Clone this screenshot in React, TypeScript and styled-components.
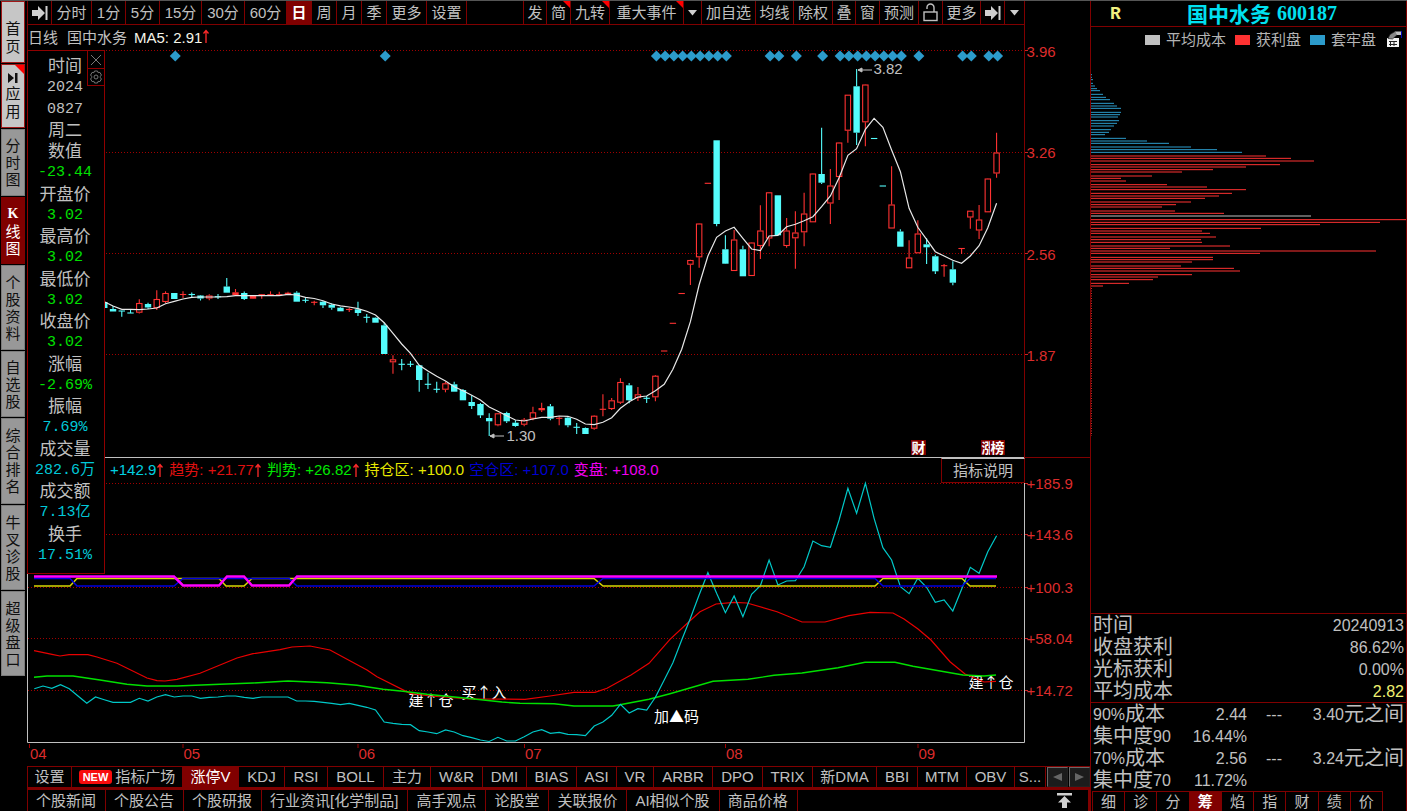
import React from 'react';
import styled, { createGlobalStyle, css } from 'styled-components';

const DARK_RED = '#800000';
const GREY = '#c0c0c0';
const CYAN = '#54fcfc';
const RED = '#ff3232';
const BLUE = '#2c9bcb';
const SANS = `'Liberation Sans', 'Noto Sans CJK SC', sans-serif`;
const CJK = `'Noto Sans CJK SC', sans-serif`;

const GlobalStyle = createGlobalStyle`
  * { box-sizing: border-box; }
  body { margin: 0; background: #000; color: ${GREY}; font: 15px/20px ${SANS}; overflow: hidden; }
  button { font: inherit; color: inherit; background: none; border: 0; padding: 0; margin: 0; cursor: pointer; }
`;

/* ---------- data ---------- */

type Kind = 'r' | 'c';
type Candle = [Kind, number, number, number, number];

const FIRST_CANDLE = 8;
const xAt = (i: number) => 34.3 + 8.748 * i;

/* kind, high, body top, body bottom, low */
const CANDLES: Candle[] = [
  ['c', 301, 302, 308, 308], ['c', 306, 309, 311.5, 311.5], ['c', 311, 311, 311, 316.7], ['c', 309, 313, 313, 313],
  ['r', 299.3, 303, 312.7, 313.5], ['c', 302.7, 304, 307.5, 309], ['r', 290.3, 299, 308, 310], ['r', 291.3, 293, 302, 303],
  ['c', 293, 293, 299, 299], ['r', 291.3, 294.5, 294.5, 298], ['c', 292.5, 294.5, 294.5, 298], ['c', 295, 295.5, 298.5, 300.5],
  ['r', 294.3, 295.5, 298.5, 300.3], ['c', 294, 296.7, 296.7, 299], ['c', 278, 286.5, 292.7, 292.7], ['r', 289, 292.3, 295, 296],
  ['c', 291.5, 293, 299, 300], ['r', 295, 296, 298.7, 299], ['r', 294.5, 294.7, 294.7, 298.7], ['r', 291.3, 294.7, 294.7, 295],
  ['r', 291.7, 294.7, 294.7, 295], ['r', 291.7, 292.7, 294.7, 295], ['c', 291.3, 292.7, 301.7, 301.7], ['c', 298, 300.3, 300.3, 302.7],
  ['r', 300.7, 302.3, 302.3, 305.3], ['c', 301, 301.7, 305.3, 308], ['c', 303.3, 304.7, 307.7, 309.7], ['c', 307, 307.7, 311.3, 311.3],
  ['r', 307.7, 309.5, 309.5, 312], ['c', 301.7, 309.3, 313, 316], ['c', 314, 317.3, 317.3, 322.7], ['c', 317.3, 317.7, 322.7, 322.7],
  ['c', 322.7, 325.3, 354, 354], ['r', 355.3, 359.3, 362.3, 373.7], ['c', 359, 364.3, 364.3, 370.3], ['c', 361, 364.3, 364.3, 367],
  ['c', 365, 365.3, 380, 391.7], ['c', 372.7, 384.3, 384.3, 389], ['c', 381.7, 389.3, 389.3, 392.7], ['r', 381.7, 383.3, 389.7, 392.3],
  ['c', 381.7, 384.3, 391.7, 391.7], ['c', 389, 390, 400.3, 400.3], ['c', 395.3, 402, 406, 409], ['c', 403, 404, 415.3, 418],
  ['c', 413.3, 418, 421.3, 436], ['r', 413, 413.3, 425.3, 426.3], ['c', 411.7, 413, 421.3, 423], ['c', 420.3, 422.7, 426, 426.7],
  ['r', 418, 419.7, 424.7, 426.3], ['r', 406.7, 412.3, 418.7, 420.3], ['r', 402.7, 408, 410.3, 412], ['c', 404, 406.3, 418.7, 420.3],
  ['r', 416.7, 418.3, 418.3, 425.3], ['c', 417, 417.7, 425.3, 427.3], ['c', 423, 427.3, 427.3, 434], ['c', 427.5, 428, 434, 434],
  ['r', 415.3, 415.7, 428.7, 429.7], ['r', 394.3, 409.3, 409.3, 416.3], ['r', 398, 400.3, 409, 410], ['r', 378.3, 382, 402.7, 404],
  ['c', 383, 385.3, 400.3, 403.3], ['r', 387, 394.3, 398, 401], ['c', 396, 398.3, 398.3, 403], ['r', 375, 375.7, 397.3, 401.3],
  ['r', 351, 351, 351, 351], ['r', 323.3, 323.3, 323.3, 323.3], ['r', 293.5, 293.5, 293.5, 293.5], ['r', 259.7, 260, 264.7, 285],
  ['r', 223.3, 223.5, 257.3, 267.7], ['r', 183.3, 183.3, 183.3, 183.3], ['c', 140.3, 140.3, 224, 226.3], ['c', 235.3, 249.3, 263.7, 264],
  ['r', 230, 239.5, 271, 271], ['c', 245.7, 249.3, 276.3, 276.3], ['r', 242.3, 242.5, 276, 276], ['r', 205.3, 230.5, 246, 259],
  ['r', 192, 192.3, 238.5, 246.3], ['c', 195.3, 195.3, 235.3, 235.3], ['r', 218, 230.5, 246, 247.7], ['r', 211.3, 232.5, 238.3, 268.7],
  ['r', 192.7, 213.5, 232.3, 246.3], ['r', 173.3, 173.5, 222.3, 222.3], ['c', 127.7, 174, 182.7, 184], ['r', 169, 185.5, 203.5, 224],
  ['r', 142.3, 142.5, 177, 200], ['r', 94.7, 94.7, 130.7, 142.7], ['c', 69, 86.3, 132.7, 145], ['r', 84.3, 84.5, 122.3, 146.3],
  ['c', 138.5, 138.5, 138.5, 138.5], ['c', 186, 186, 186, 186], ['r', 166.3, 204.5, 228.5, 228.5], ['c', 229.3, 231.5, 246.7, 246.7],
  ['r', 240.3, 257.5, 268.3, 268.3], ['r', 220.3, 233.5, 253.3, 253.3], ['c', 238.3, 244.3, 247.3, 264], ['c', 254.7, 256.3, 271.3, 274],
  ['r', 264, 265.7, 265.7, 276.7], ['c', 261.3, 269.3, 282.7, 285.3], ['r', 248.5, 248.5, 248.5, 254], ['r', 210.7, 210.7, 217.5, 228.7],
  ['r', 205, 219.5, 230.5, 239], ['r', 178.3, 178.5, 212.3, 212.3], ['r', 132.7, 152.5, 173.5, 177.7],
];

const MA5 = [
  301.7, 306, 309.3, 309.3, 309.7, 309, 308, 303.7, 301.3, 299, 297.3, 297, 297, 297, 296.7, 295.7, 295.7, 295.7, 295.7, 295.7, 295.7,
  294.3, 295, 297.3, 298.5, 300.7, 304, 305.8, 307, 308.7, 311.3, 315, 322.7, 333.3, 344, 353.3, 365.3, 371, 376.3, 381, 386.7, 390.7,
  395.3, 400, 407, 411.3, 415.7, 420, 421, 419, 417.3, 417.3, 416, 416.3, 419.3, 424, 424.7, 422.3, 417.7, 408.3, 401.7, 397, 396,
  390.7, 384.3, 369.3, 349.3, 321.7, 285, 256, 237.3, 231, 227.3, 238.3, 249, 250.7, 236, 235.3, 226.7, 224.3, 220.7, 216.7, 206.7,
  196, 177.7, 155.3, 148.7, 129.3, 118.3, 127.3, 150, 171.7, 208.3, 227.3, 239.3, 251.7, 256, 260.3, 263.3, 256, 245.7, 227.7, 203.3,
];

const TREND = [
  688.7, 686, 688.3, 684.7, 688.7, 696, 703.3, 697, 699.7, 702.3, 702.3, 702.3, 698.3, 701, 697, 694.7, 697, 696, 696, 698.3, 697.3,
  697, 696, 696, 697.3, 698.3, 697, 697, 697, 697, 701, 701, 701.3, 702.3, 703.3, 704.7, 703.3, 705.3, 707.3, 710, 722, 723.3, 724.3,
  724.7, 730.7, 732, 733.7, 730, 732, 735.7, 737.7, 740, 741.5, 737.3, 741, 741, 736.7, 732, 729.7, 733.3, 732.3, 734.3, 734.7, 735.7,
  726, 722, 715.3, 704.3, 713, 708.7, 710, 697.3, 680, 662.7, 640, 618.3, 595, 572.7, 593.3, 612.7, 596, 616.7, 594.3, 585.7, 560, 585,
  581, 580.7, 566.7, 541, 545.7, 547.3, 520, 488.3, 513.3, 483.3, 518.3, 547.7, 560, 586.7, 593.7, 578.3, 587.3, 602.3, 600, 611,
  589.3, 567.3, 573.3, 551.7, 535.7,
];

const RED_LINE =
  '34,650.7 52,654.3 60,656 69,654.7 88,654.7 97,657 117,663.3 147,678 157,680.7 165,681 177,679.3 200,673.3 237,658 253,653.7 280,649.7 292,647 310,646 330,650 367,670 377,676.7 410,693.3 430,696 470,699 525,699.3 550,696 574,692.3 595,692.3 607,688.3 631,675 649,663.3 670,639.3 690,620.7 700,611.7 716,604 734,602.3 747,603 777,611.7 802,622 825,622 849,615.7 870,612.3 893,613 904,619 918,629 931,640 950,661.7 965,674 984,682 996,681.3';
const GREEN_LINE =
  '34,677.3 47,676 73,676 100,680 127,684.3 147,686 177,686 220,684.3 253,683 288,681 327,682.7 357,685.3 383,689.3 403,691.3 427,694.3 467,698.3 502,702 520,703.3 554,703.7 574,706 613,706 620,704.7 649,699.3 670,693.7 713,681.3 748,679.3 774,675.3 802,673 838,667.7 865,662.3 895,662.3 913,666.3 963,675 984,676 996,675';

const toPoints = (ys: number[], from: number) => ys.map((y, i) => `${xAt(from + i).toFixed(1)},${y}`).join(' ');

const MARKED = [16, 40, 71, 72, 73, 74, 75, 76, 77, 78, 79, 84, 85, 87, 90, 92, 93, 94, 95, 96, 97, 98, 99, 101, 106, 107, 109, 110];

/* y position in thirds of a pixel, bar length */
const TRAPPED = [
  [224, 1], [232, 1], [239, 2], [250, 2], [258, 4], [266, 6], [272, 9], [283, 12], [292, 15], [299, 19], [310, 23], [318, 26], [325, 30],
  [337, 30], [344, 29], [351, 27], [362, 28], [370, 26], [378, 23], [389, 20], [397, 18], [404, 14], [415, 35], [423, 56], [430, 78],
  [441, 100], [449, 126], [457, 151],
];
const PROFIT = [
  [468, 175], [475, 200], [483, 223], [494, 189], [501, 155], [509, 122], [516, 91], [528, 61], [535, 30], [543, 35], [554, 76],
  [561, 116], [569, 155], [580, 141], [588, 128], [595, 114], [606, 100], [614, 85], [621, 71], [633, 84], [640, 133], [659, 315],
  [667, 289], [674, 229], [685, 170], [693, 111], [700, 119], [711, 125], [719, 110], [727, 111], [738, 139], [745, 79], [753, 285],
  [760, 169], [772, 122], [779, 122], [786, 101], [798, 90], [805, 143], [813, 149], [824, 101], [831, 67], [839, 62], [850, 38], [858, 12],
];

/* ---------- shell ---------- */

const Page = styled.div`
  display: flex;
  height: 100vh;
  background: #000;
  border-top: 1px solid #555;
`;

const SideNav = styled.nav`
  flex: none;
  width: 27px;
  padding: 0 1px;
  display: flex;
  flex-direction: column;
  gap: 1px;
`;

const SideButton = styled.button<{ $tone: 'light' | 'grey' | 'active'; $h: number }>`
  position: relative;
  width: 24px;
  height: ${p => p.$h}px;
  flex: none;
  padding: 0 4px;
  display: flex;
  flex-direction: column;
  align-items: center;
  justify-content: center;
  gap: 2px;
  word-break: break-all;
  line-height: 17px;
  color: #101010;
  background: #989898;
  border: 1px solid #7c7c7c;
  ${p => p.$tone === 'light' && css`
    justify-content: flex-end;
    padding-bottom: 6px;
    line-height: 18px;
    background: #c6c6c6;
    border-color: #a01818;
  `}
  ${p => p.$tone === 'active' && css`gap: 0; background: ${DARK_RED}; border-color: ${DARK_RED}; color: #fff;`}
`;

const SerifK = styled.b`
  font: bold 14px/18px 'Liberation Serif', serif;
`;

const Corner = styled.i<{ $s: number }>`
  position: absolute;
  top: 0;
  right: 0;
  border-style: solid;
  border-width: 0 ${p => p.$s}px ${p => p.$s}px 0;
  border-color: transparent #ff0000 transparent transparent;
`;

const Main = styled.main`
  flex: 1;
  min-width: 0;
  display: flex;
  flex-direction: column;
  position: relative;
`;

/* ---------- toolbar ---------- */

const Toolbar = styled.div`
  flex: none;
  height: 24px;
  display: flex;
  justify-content: space-between;
  border: solid ${DARK_RED};
  border-width: 0 1px 1px;
  margin-right: 65px;
`;

const ToolGroup = styled.div`
  display: flex;
`;

const ToolButton = styled.button<{ $w: number; $active?: boolean }>`
  position: relative;
  width: ${p => p.$w}px;
  display: flex;
  align-items: center;
  justify-content: center;
  white-space: nowrap;
  border-right: 1px solid ${DARK_RED};
  ${p => p.$active && css`background: ${DARK_RED}; color: #fff; font-weight: bold;`}
  ${ToolGroup} + ${ToolGroup} &:first-child { border-left: 1px solid ${DARK_RED}; }
  ${ToolGroup} + ${ToolGroup} &:last-child { border-right: 0; }
`;

const TitleRow = styled.div`
  flex: none;
  height: 25px;
  padding-right: 65px;
`;

const TitleInner = styled.div`
  height: 100%;
  display: flex;
  align-items: center;
  gap: 9px;
  border: solid ${DARK_RED};
  border-width: 0 1px;
`;

const MaValue = styled.span`
  margin-left: -2px;
  color: #f4f4e8;
`;

const Arrow = styled.span`
  display: inline-block;
  width: 8px;
  color: #ff2a2a;
  svg { display: block; }
`;

const Up = () => (
  <Arrow role="img" aria-label="up">
    <svg width="8" height="14" viewBox="0 0 8 14"><path d="M4 1V14M1.5 4.5L4 1.5L6.500 4.500" fill="none" stroke="currentColor" strokeWidth="1.3" /></svg>
  </Arrow>
);

/* ---------- charts ---------- */

const Charts = styled.div`
  flex: 1;
  min-height: 0;
  position: relative;
  display: flex;
  flex-direction: column;
`;

const PricePane = styled.section`
  flex: 408 1 0;
  min-height: 0;
`;

const IndicatorPane = styled.section`
  flex: 308 1 0;
  min-height: 0;
  position: relative;
`;

const ChartSvg = styled.svg`
  display: block;
  width: 100%;
  height: 100%;
  overflow: visible;
  font: 15px ${SANS};
`;

const IndicatorLegend = styled.div`
  position: absolute;
  top: 2px;
  left: 83px;
  display: flex;
  gap: 5px;
`;

const LegendItem = styled.span<{ $c: string }>`
  display: flex;
  align-items: center;
  white-space: nowrap;
  color: ${p => p.$c};
`;

const HelpButton = styled.button`
  position: absolute;
  top: 0;
  right: 65px;
  width: 84px;
  height: 25px;
  background: #000;
  border: 1px solid ${DARK_RED};
  border-top-color: ${GREY};
`;

const DataPanel = styled.aside`
  position: absolute;
  z-index: 2;
  top: 0;
  left: 0;
  width: 78px;
  height: 524px;
  padding: 4px 2px 8px 0;
  background: #000;
  border: 1px solid #900000;
  display: flex;
  flex-direction: column;
`;

const DataRow = styled.div<{ $c?: string }>`
  flex: 1;
  display: flex;
  align-items: center;
  justify-content: center;
  white-space: nowrap;
  padding-bottom: 2px;
  font: 17px/19px ${CJK};
  color: ${GREY};
  ${p => p.$c && css`
    padding: 2px 0 0;
    color: ${p.$c};
    font: 15px/19px 'Liberation Mono', 'Noto Sans CJK SC', monospace;
  `}
`;

const PanelTools = styled.div`
  position: absolute;
  top: -1px;
  right: -1px;
  width: 18px;
  background: #000;
  border: 1px solid #900000;
`;

const PanelTool = styled.button`
  width: 16px;
  height: 17px;
  display: flex;
  align-items: center;
  justify-content: center;
  color: #777;
  & + & { border-top: 1px solid #900000; }
`;

/* ---------- bottom bars ---------- */

const IndicatorTabs = styled.div`
  flex: none;
  height: 21px;
  display: flex;
  border-top: 1px solid ${DARK_RED};
  border-left: 1px solid ${DARK_RED};
`;

const IndicatorTab = styled.button<{ $w: number; $active?: boolean }>`
  flex: none;
  width: ${p => p.$w}px;
  padding-bottom: 1px;
  display: flex;
  align-items: center;
  justify-content: center;
  gap: 3px;
  white-space: nowrap;
  border-right: 1px solid ${DARK_RED};
  ${p => p.$active && css`background: ${DARK_RED}; color: #fff;`}
`;

const MoreTab = styled(IndicatorTab)`
  flex: 1;
  min-width: 0;
`;

const NewBadge = styled.span`
  padding: 0 4px;
  border-radius: 3px;
  background: #f80c0c;
  color: #fff;
  font: bold 11px/14px ${SANS};
`;

const ScrollButton = styled.button`
  flex: none;
  width: 21px;
  margin-left: 1px;
  display: flex;
  align-items: center;
  justify-content: center;
  background: #1c1c1c;
  border: 1px solid #686868;
  border-right-color: #222;
  border-bottom-color: #222;
`;

const NewsBar = styled.div`
  flex: none;
  height: 24px;
  display: flex;
  border-top: 3px solid ${DARK_RED};
  border-left: 1px solid ${DARK_RED};
  border-right: 2px solid ${DARK_RED};
`;

const NewsTab = styled.button`
  padding: 0 9px 0 8px;
  white-space: nowrap;
  border-right: 1px solid ${DARK_RED};
`;

const TopButton = styled.button`
  margin: 0 16px 0 auto;
  display: flex;
  align-items: center;
`;

/* ---------- right column ---------- */

const Side = styled.aside`
  flex: none;
  width: 317px;
  display: flex;
  flex-direction: column;
  border: solid ${DARK_RED};
  border-width: 0 1px;
`;

const StockTitle = styled.header`
  flex: none;
  height: 26px;
  display: flex;
  align-items: center;
  padding-left: 19px;
  border-bottom: 1px solid ${DARK_RED};
`;

const Flag = styled.b`
  width: 77px;
  font: bold 18px/24px 'Liberation Mono', monospace;
  color: #f0f080;
`;

const StockName = styled.h1`
  margin: 0;
  padding-bottom: 2px;
  display: flex;
  gap: 6px;
  font: bold 21px/22px ${CJK};
  color: #00e0f0;
`;

const StockCode = styled.span`
  font: bold 20px/22px 'Liberation Serif', serif;
`;

const CostLegend = styled.div`
  flex: none;
  height: 25px;
  padding-right: 4px;
  display: flex;
  align-items: center;
  justify-content: flex-end;
  gap: 9px;
`;

const CostItem = styled.span<{ $c: string }>`
  display: flex;
  align-items: center;
  gap: 6px;
  white-space: nowrap;
  color: #b4b4b4;
  &::before { content: ''; width: 15px; height: 10px; background: ${p => p.$c}; }
`;

const CostChart = styled.svg`
  flex: 1;
  min-height: 0;
  width: 100%;
  display: block;
`;

const StatTable = styled.table`
  flex: none;
  width: 100%;
  border-collapse: collapse;
  border-top: 1px solid ${DARK_RED};
  table-layout: fixed;
  td, th {
    height: 22px;
    padding: 2px 2px 0;
    font: 16px/20px ${SANS};
    white-space: nowrap;
    text-align: right;
  }
  th { text-align: left; }
`;

const Cn = styled.span`
  font-size: 20px;
  line-height: 16px;
  vertical-align: -1px;
`;

const Highlight = styled.td`
  color: #f0f070;
`;

const SideTabs = styled.div`
  flex: none;
  height: 20px;
  padding: 0 23px 0 1px;
  display: flex;
`;

const SideTab = styled.button<{ $active?: boolean }>`
  flex: 1;
  line-height: 18px;
  border: 1px solid ${DARK_RED};
  border-left-width: 0;
  border-bottom: 0;
  &:first-child { border-left-width: 1px; }
  ${p => p.$active && css`background: ${DARK_RED}; color: #fff; font-weight: bold;`}
`;

/* ---------- icons ---------- */

const JumpIcon = () => (
  <svg width="16" height="14" viewBox="0 0 16 14"><path d="M0 4h6V0l7 7l-7 7V10H0zM13.500 0h2v14h-2z" fill="#d0d0d0" /></svg>
);
const DownIcon = () => (
  <svg width="9" height="6" viewBox="0 0 9 6"><path d="M0 0h9L4.500 5.500z" fill="#d0d0d0" /></svg>
);
const LockIcon = () => (
  <svg width="15" height="19" viewBox="0 0 15 19" fill="none" stroke={GREY} strokeWidth="1.4">
    <rect x="1" y="9" width="13" height="8.500" />
    <path d="M4 6V4.500a3.500 3.500 0 0 1 7 0V9" />
  </svg>
);
const GearIcon = () => (
  <svg width="14" height="14" viewBox="0 0 14 14" fill="none" stroke="currentColor">
    <path d="M5.500 1h3l.6 1.700 1.800-.3 1.500 2.600-1.100 1.500v1l1.100 1.500-1.500 2.600-1.800-.3L8.500 13h-3l-.6-1.700-1.800.3L1.600 9l1.100-1.500v-1L1.600 5l1.500-2.600 1.800.3z" />
    <circle cx="7" cy="7" r="2" />
  </svg>
);

/* ---------- chart pieces ---------- */

const GridLine = ({ y }: { y: number }) => (
  <g>
    <line x1="28" x2="1023" y1={y} y2={y} stroke="#a00000" strokeDasharray="1 2" />
    <line x1="1025" x2="1028" y1={y} y2={y} stroke="#d02020" />
  </g>
);

const AxisLabel = ({ y, children }: { y: number; children: string }) => (
  <text x="1026.500" y={y + 5.5} fill="#dc2c2c">{children}</text>
);

const CandleMark = ({ c, i }: { c: Candle; i: number }) => {
  const [kind, high, top, bottom, low] = c;
  const x = xAt(i);
  const color = kind === 'r' ? RED : CYAN;
  if (top === bottom) {
    return (
      <g stroke={color} strokeWidth="1.1">
        <line x1={x - 3.2} x2={x + 3.2} y1={top} y2={top} />
        {low - high > 0.5 && <line x1={x} x2={x} y1={high} y2={low} />}
      </g>
    );
  }
  return (
    <g stroke={color} strokeWidth="1.1">
      {high < top && <line x1={x} x2={x} y1={high} y2={top} />}
      {low > bottom && <line x1={x} x2={x} y1={bottom} y2={low} />}
      {kind === 'c' || bottom - top < 2.9
        ? <rect x={x - 3.2} y={top} width="6.400" height={bottom - top} fill={color} stroke="none" />
        : <rect x={x - 2.7} y={top + 0.5} width="5.400" height={bottom - top - 1} fill="none" />}
    </g>
  );
};

const EventBadge = ({ x, children }: { x: number; children: string }) => (
  <g>
    <rect x={x} y="440" width="15" height="15" fill={DARK_RED} />
    <text x={x + 0.5} y="453" fontSize="14" fontWeight="bold" fill="#fff">{children}</text>
  </g>
);

const PriceChart = () => (
  <ChartSvg viewBox="27 50 1063 408" preserveAspectRatio="xMinYMin meet" role="img" aria-label="K线图">
    {[50.5, 152.5, 253.5, 354.5].map(y => <GridLine key={y} y={y} />)}
    <AxisLabel y={51}>3.96</AxisLabel>
    <AxisLabel y={152.5}>3.26</AxisLabel>
    <AxisLabel y={254}>2.56</AxisLabel>
    <AxisLabel y={355}>1.87</AxisLabel>
    {CANDLES.map((c, k) => <CandleMark key={k} c={c} i={k + FIRST_CANDLE} />)}
    <polyline points={toPoints(MA5, FIRST_CANDLE)} fill="none" stroke="#e8e8e8" strokeWidth="1.200" />
    {MARKED.map(i => {
      const x = xAt(i) + 1;
      return <path key={i} d={`M${x - 5.5} 56L${x} 50.500L${x + 5.5} 56L${x} 61.500Z`} fill={BLUE} />;
    })}
    <g fill={GREY} stroke={GREY}>
      <path d="M858 70H872M858 70l4-2v4z" />
      <path d="M490 436H504M490 436l4-2v4z" />
    </g>
    <text x="873.500" y="74" fill={GREY}>3.82</text>
    <text x="506.500" y="440.500" fill={GREY}>1.30</text>
    <EventBadge x={911}>财</EventBadge>
    <EventBadge x={981}>涨</EventBadge>
    <EventBadge x={990}>榜</EventBadge>
    <path d="M27.500 50V458M1024.500 50V458M1025 457.500H1090" stroke={DARK_RED} fill="none" />
    <path d="M27 457.500H1024" stroke={GREY} />
  </ChartSvg>
);

const Signal = ({ x, y, children }: { x: number; y: number; children: string }) => (
  <text x={x} y={y + 5.5} fill="#fff" fontFamily="'Noto Sans CJK SC', sans-serif">{children}</text>
);

const MONTHS: [string, number][] = [['04', 29.5], ['05', 183], ['06', 358], ['07', 524.5], ['08', 725.5], ['09', 918]];
const LEVELS: [string, number][] = [['+185.9', 483.5], ['+143.6', 534.5], ['+100.3', 587.5], ['+58.04', 638.5], ['+14.72', 690.5]];

const IndicatorChart = () => (
  <ChartSvg viewBox="27 458 1063 308" preserveAspectRatio="xMinYMin meet" role="img" aria-label="涨停V">
    {LEVELS.map(([label, y]) => (
      <g key={label}><GridLine y={y} /><AxisLabel y={y}>{label}</AxisLabel></g>
    ))}
    <Signal x={408.5} y={700}>建↑仓</Signal>
    <Signal x={461.5} y={692}>买↑入</Signal>
    <Signal x={654} y={716}>加▲码</Signal>
    <Signal x={968.5} y={682}>建↑仓</Signal>
    <g fill="none">
      <polyline points={RED_LINE} stroke="#e80000" strokeWidth="1.200" />
      <polyline points={GREEN_LINE} stroke="#00e000" strokeWidth="1.400" />
      <polyline points={toPoints(TREND, 0)} stroke="#00c8c8" strokeWidth="1.200" />
      <path d="M34 586H70L77 578.500H219L226 586H244L252 578.500H594L603 586H875L883 578.500H962L970 586H996" stroke="#d8d800" strokeWidth="1.500" />
      <path d="M34 578.500H70L77 586H174L183 578.500H289L297 586H594L603 578.500H875L883 586H962L970 578.500H996" stroke="#0000e0" strokeWidth="1.500" />
      <path d="M34 576.500H174L183 585.500H219L227 576.500H244L252 585.500H289L297 576.500H997" stroke="#ff00ff" strokeWidth="2.500" />
      <path d="M27.500 458V742.500H1024.500V458" stroke={GREY} />
    </g>
    {MONTHS.map(([label, x]) => (
      <g key={label}>
        <line x1={x} x2={x} y1="744" y2="748" stroke="#a00000" />
        <text x={x + 0.5} y="759" fill="#dc2c2c">{label}</text>
      </g>
    ))}
  </ChartSvg>
);

const Bars = ({ data, color }: { data: number[][]; color: string }) => (
  <g fill={color}>
    {data.map(([y, w]) => <rect key={y} x="1091" y={y / 3 - 0.5} width={w} height="1" />)}
  </g>
);

/* ---------- content ---------- */

const GREEN = '#00e000';
const TEAL = '#00c8d8';
const DATA_ROWS: [string, string?][] = [
  ['时间'], ['2024', GREY], ['0827', GREY], ['周二'], ['数值'], ['-23.44', GREEN], ['开盘价'], ['3.02', GREEN], ['最高价'], ['3.02', GREEN],
  ['最低价'], ['3.02', GREEN], ['收盘价'], ['3.02', GREEN], ['涨幅'], ['-2.69%', GREEN], ['振幅'], ['7.69%', TEAL], ['成交量'],
  ['282.6万', TEAL], ['成交额'], ['7.13亿', TEAL], ['换手'], ['17.51%', TEAL],
];

const PERIODS: [string, number][] = [
  ['分时', 40], ['1分', 34], ['5分', 34], ['15分', 42], ['30分', 43], ['60分', 42], ['日', 25], ['周', 25], ['月', 25], ['季', 25], ['更多', 40], ['设置', 40],
];

const TABS: [string, number][] = [
  ['KDJ', 46], ['RSI', 43], ['BOLL', 56], ['主力', 47], ['W&R', 52], ['DMI', 44], ['BIAS', 50], ['ASI', 40], ['VR', 37], ['ARBR', 59],
  ['DPO', 50], ['TRIX', 50], ['新DMA', 64], ['BBI', 41], ['MTM', 49], ['OBV', 48],
];

const SIDE_ITEMS: [string, number][] = [['个股资料', 85], ['自选股', 66], ['综合排名', 86], ['牛叉诊股', 85], ['超级盘口', 85]];

export default function App() {
  return (
    <>
      <GlobalStyle />
      <Page>
        <SideNav>
          <SideButton $tone="light" $h={62}>首页</SideButton>
          <SideButton $tone="light" $h={64}>
            <Corner $s={9} />
            <svg width="10" height="10" viewBox="0 0 10 10"><path d="M0 0l6 5l-6 5zM7 0h2.500v10H7z" fill="#111" /></svg>
            应用
          </SideButton>
          <SideButton $tone="grey" $h={67}>分时图</SideButton>
          <SideButton $tone="active" $h={67}><SerifK>K</SerifK>线图</SideButton>
          {SIDE_ITEMS.map(([t, h]) => <SideButton key={t} $tone="grey" $h={h}>{t}</SideButton>)}
        </SideNav>

        <Main>
          <Toolbar>
            <ToolGroup>
              <ToolButton $w={24} aria-label="跳转"><JumpIcon /></ToolButton>
              {PERIODS.map(([t, w]) => <ToolButton key={t} $w={w} $active={t === '日'}>{t}</ToolButton>)}
            </ToolGroup>
            <ToolGroup>
              <ToolButton $w={24}>发</ToolButton>
              <ToolButton $w={24}>简<Corner $s={7} /></ToolButton>
              <ToolButton $w={39}>九转<Corner $s={7} /></ToolButton>
              <ToolButton $w={74}>重大事件<Corner $s={7} /></ToolButton>
              <ToolButton $w={18} aria-label="展开"><DownIcon /></ToolButton>
              <ToolButton $w={54}>加自选</ToolButton>
              <ToolButton $w={38}>均线</ToolButton>
              <ToolButton $w={39}>除权</ToolButton>
              <ToolButton $w={23}>叠</ToolButton>
              <ToolButton $w={24}>窗</ToolButton>
              <ToolButton $w={39}>预测</ToolButton>
              <ToolButton $w={24} aria-label="锁定"><LockIcon /></ToolButton>
              <ToolButton $w={38}>更多</ToolButton>
              <ToolButton $w={24} aria-label="跳转"><JumpIcon /></ToolButton>
              <ToolButton $w={19} aria-label="展开"><DownIcon /></ToolButton>
            </ToolGroup>
          </Toolbar>
          <TitleRow>
            <TitleInner>
              <span>日线</span>
              <span>国中水务</span>
              <MaValue>MA5: 2.91<Up /></MaValue>
            </TitleInner>
          </TitleRow>

          <Charts>
            <PricePane><PriceChart /></PricePane>
            <IndicatorPane>
              <IndicatorChart />
              <IndicatorLegend>
                <LegendItem $c="#00d0e0">+142.9<Up /></LegendItem>
                <LegendItem $c="#e01010">趋势: +21.77<Up /></LegendItem>
                <LegendItem $c="#00e800">判势: +26.82<Up /></LegendItem>
                <LegendItem $c="#e8e800">持仓区: +100.0</LegendItem>
                <LegendItem $c="#0000d0">空仓区: +107.0</LegendItem>
                <LegendItem $c="#f000f0">变盘: +108.0</LegendItem>
              </IndicatorLegend>
              <HelpButton>指标说明</HelpButton>
            </IndicatorPane>
            <DataPanel>
              {DATA_ROWS.map(([t, c], k) => <DataRow key={k} $c={c}>{t}</DataRow>)}
              <PanelTools>
                <PanelTool aria-label="关闭">
                  <svg width="12" height="12" viewBox="0 0 12 12"><path d="M1 1L11 11M11 1L1 11" stroke="currentColor" /></svg>
                </PanelTool>
                <PanelTool aria-label="参数"><GearIcon /></PanelTool>
              </PanelTools>
            </DataPanel>
          </Charts>

          <IndicatorTabs>
            <IndicatorTab $w={44}>设置</IndicatorTab>
            <IndicatorTab $w={111}><NewBadge>NEW</NewBadge>指标广场</IndicatorTab>
            <IndicatorTab $w={56} $active>涨停V</IndicatorTab>
            {TABS.map(([t, w]) => <IndicatorTab key={t} $w={w}>{t}</IndicatorTab>)}
            <MoreTab $w={30}>S...</MoreTab>
            <ScrollButton aria-label="向左"><svg width="9" height="8" viewBox="0 0 9 8"><path d="M9 0v8L0 4z" fill="#666" /></svg></ScrollButton>
            <ScrollButton aria-label="向右"><svg width="9" height="8" viewBox="0 0 9 8"><path d="M0 0v8l9-4z" fill="#666" /></svg></ScrollButton>
          </IndicatorTabs>
          <NewsBar>
            {['个股新闻', '个股公告', '个股研报', '行业资讯[化学制品]', '高手观点', '论股堂', '关联报价', 'AI相似个股', '商品价格'].map(t => (
              <NewsTab key={t}>{t}</NewsTab>
            ))}
            <TopButton aria-label="置顶">
              <svg width="15" height="15" viewBox="0 0 15 15"><path d="M0 0h15v2.500H0zM7.500 3L14 9.500H10V15H5V9.500H1z" fill="#d0d0d0" /></svg>
            </TopButton>
          </NewsBar>
        </Main>

        <Side>
          <StockTitle>
            <Flag>R</Flag>
            <StockName>国中水务<StockCode>600187</StockCode></StockName>
          </StockTitle>
          <CostLegend>
            <CostItem $c={GREY}>平均成本</CostItem>
            <CostItem $c={RED}>获利盘</CostItem>
            <CostItem $c={BLUE}>套牢盘</CostItem>
            <svg width="17" height="18" viewBox="0 0 17 18">
              <path d="M2 7h12v9H2z" fill="#f4f4f4" />
              <path d="M4 10.500h8M4 13.500h8M5.500 10v5M9 10v5" stroke="#222" />
              <path d="M3 7.500l2-4l5-3l3 2.500L7.500 8z" fill="#888" stroke="#222" strokeWidth=".7" />
              <path d="M10 .5h6v3.500h-4z" fill={GREY} />
              <path d="M16 0h1v7h-1z" fill="#0000b0" />
            </svg>
          </CostLegend>
          <CostChart viewBox="1091 52 315 561" preserveAspectRatio="xMinYMin meet" role="img" aria-label="筹码分布">
            <Bars data={TRAPPED} color={BLUE} />
            <Bars data={PROFIT} color={RED} />
            <Bars data={[[648, 220]]} color={GREY} />
            <line x1="1091.500" x2="1091.500" y1="288" y2="436" stroke="#d02828" strokeDasharray="1 1.500" />
          </CostChart>
          <StatTable>
            <tbody>
              <tr><th><Cn>时间</Cn></th><td>20240913</td></tr>
              <tr><th><Cn>收盘获利</Cn></th><td>86.62%</td></tr>
              <tr><th><Cn>光标获利</Cn></th><td>0.00%</td></tr>
              <tr><th><Cn>平均成本</Cn></th><Highlight>2.82</Highlight></tr>
            </tbody>
          </StatTable>
          <StatTable>
            <colgroup><col width="88" /><col width="70" /><col width="35" /><col /></colgroup>
            <tbody>
              <tr><th>90%<Cn>成本</Cn></th><td>2.44</td><td>---</td><td>3.40<Cn>元之间</Cn></td></tr>
              <tr><th><Cn>集中度</Cn>90</th><td>16.44%</td><td /><td /></tr>
              <tr><th>70%<Cn>成本</Cn></th><td>2.56</td><td>---</td><td>3.24<Cn>元之间</Cn></td></tr>
              <tr><th><Cn>集中度</Cn>70</th><td>11.72%</td><td /><td /></tr>
            </tbody>
          </StatTable>
          <SideTabs>
            {['细', '诊', '分', '筹', '焰', '指', '财', '绩', '价'].map(t => <SideTab key={t} $active={t === '筹'}>{t}</SideTab>)}
          </SideTabs>
        </Side>
      </Page>
    </>
  );
}
